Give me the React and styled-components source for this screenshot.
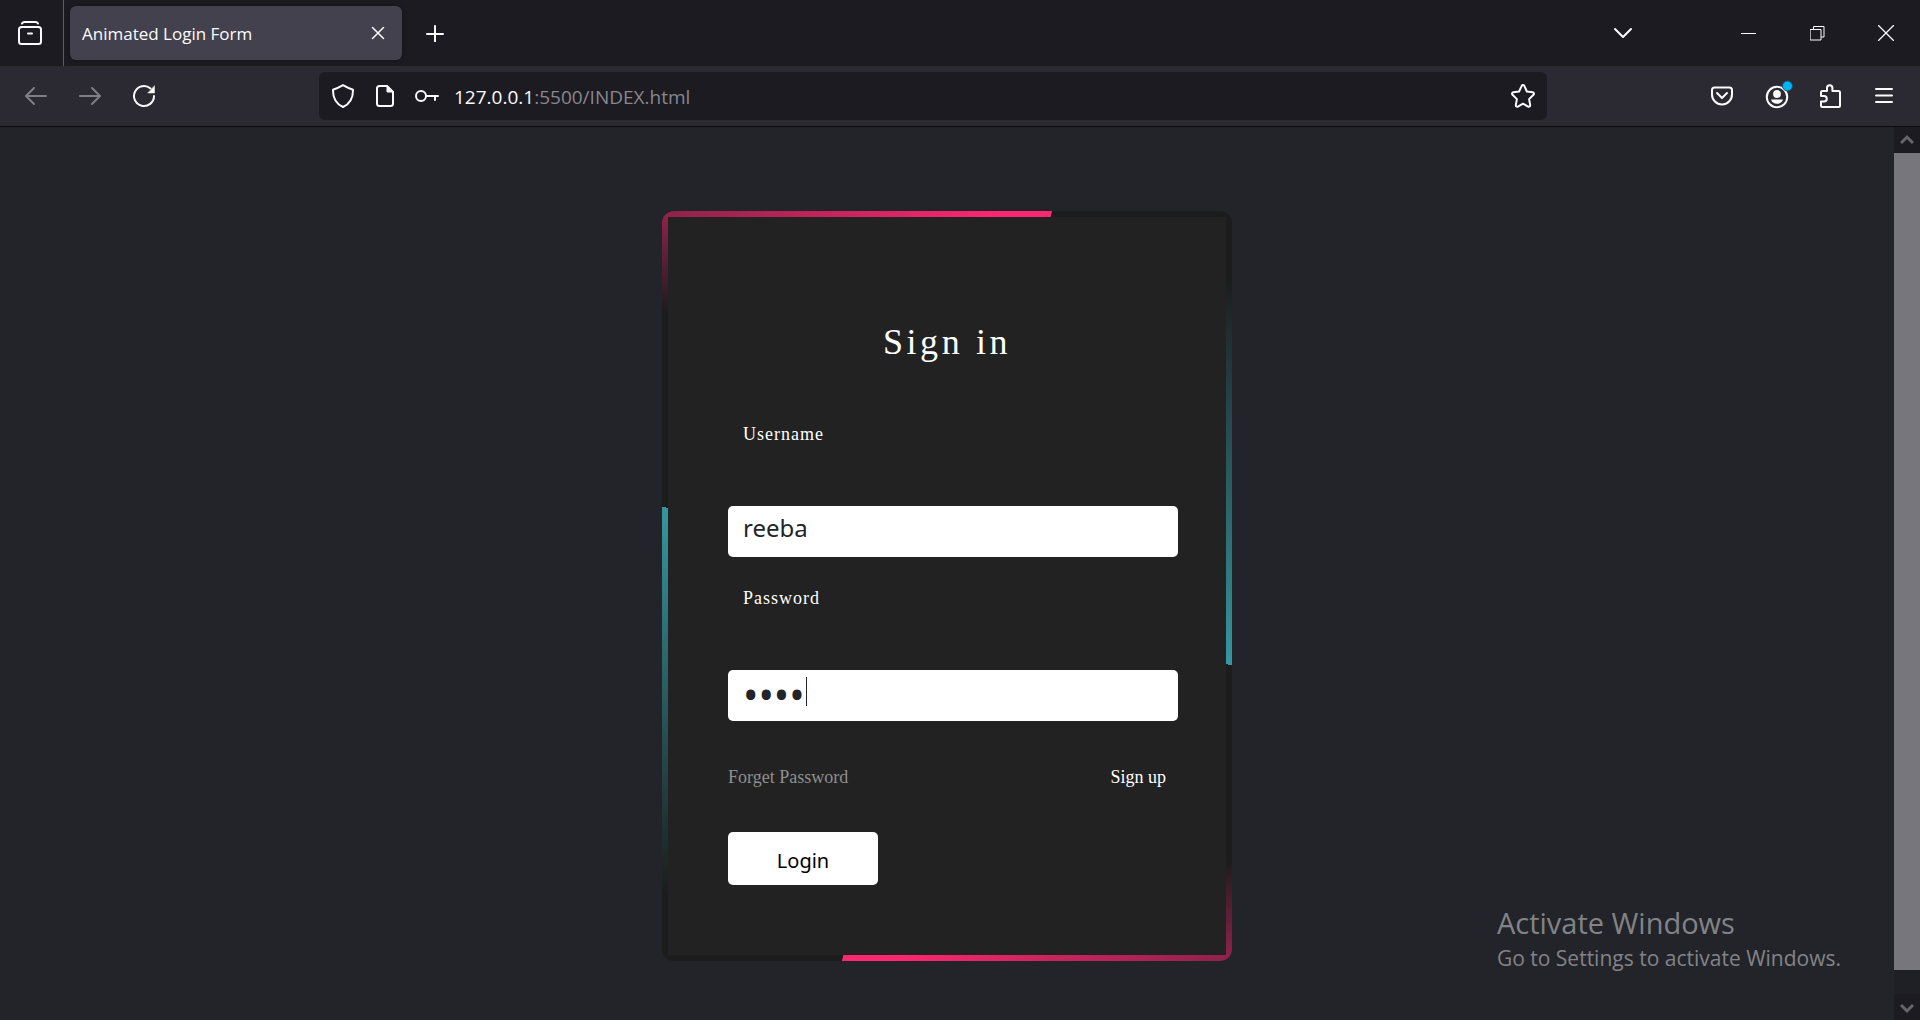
import React from "react";
import styled, { createGlobalStyle } from "styled-components";

const ui = '"Open Sans", "Noto Sans", sans-serif';
const serif = '"Liberation Serif", "Times New Roman", serif';

const GlobalStyle = createGlobalStyle`
  * { box-sizing: border-box; }
  body { margin: 0; background: #23242a; color: #fbfbfe; font-family: ${ui}; }
  button, input { font-family: inherit; }
`;

const Window = styled.div`
  display: flex;
  flex-direction: column;
  min-height: 100vh;
`;

const TabBar = styled.header`
  display: flex;
  align-items: stretch;
  height: 66px;
  background: #1c1b22;
`;

const IconButton = styled.button`
  display: flex;
  align-items: center;
  justify-content: center;
  flex: none;
  width: ${(p) => p.$width || 54}px;
  padding: 0;
  border: 0;
  background: transparent;
  color: #fbfbfe;
  opacity: ${(p) => (p.disabled ? 0.4 : 1)};
`;

const ViewCell = styled.div`
  display: flex;
  width: 64px;
  border-right: 1px solid #5b5b66;
`;

const Tab = styled.div`
  display: flex;
  align-items: center;
  width: 332px;
  margin: 6px;
  padding-left: 12px;
  border-radius: 6px;
  background: #42414d;
  box-shadow: 0 0 4px rgba(0, 0, 0, 0.4);
`;

const TabTitle = styled.span`
  flex: 1;
  padding-top: 2px;
  font-size: 17px;
  line-height: 24px;
  white-space: nowrap;
`;

const WindowControls = styled.div`
  display: flex;
  margin-left: auto;
`;

const ControlGroup = styled.div`
  display: flex;
  margin-left: 64px;
`;

const NavBar = styled.nav`
  display: flex;
  align-items: stretch;
  gap: 148px;
  height: 61px;
  padding: 6px 9px;
  background: #2b2a33;
  border-bottom: 1px solid #0c0c0d;
`;

const NavGroup = styled.div`
  display: flex;
`;

const AddressBar = styled.div`
  display: flex;
  flex: 1;
  padding: 0 3px;
  border-radius: 6px;
  background: #1c1b22;
`;

const Address = styled.div`
  flex: 1;
  padding-left: 6px;
  font-size: 19px;
  line-height: 50px;
  white-space: nowrap;
`;

const Dim = styled.span`
  color: #88878d;
`;

const Viewport = styled.div`
  position: relative;
  display: flex;
  flex: 1;
`;

const Page = styled.main`
  display: flex;
  flex: 1;
  align-items: flex-start;
  justify-content: center;
  padding: 84px 0 59px;
`;

const Card = styled.section`
  width: 570px;
  padding: 6px;
  border-radius: 12px;
  background:
    linear-gradient(104deg, #8d2248 0, #ff2770 330px, #ff2770 378px, transparent 379px) 0 0 / 396px 6px no-repeat,
    linear-gradient(284deg, #8d2248 0, #ff2770 330px, #ff2770 378px, transparent 379px) 100% 100% / 396px 6px no-repeat,
    linear-gradient(180deg, #8d2248, #1c1c1c) 0 6px / 6px 94px no-repeat,
    linear-gradient(0deg, #8d2248, #1c1c1c) 100% calc(100% - 6px) / 6px 94px no-repeat,
    linear-gradient(194deg, transparent 2px, #35979f 2px, #1c1c1c 378px) 0 295px / 6px 385px no-repeat,
    linear-gradient(14deg, transparent 2px, #35979f 2px, #1c1c1c 378px) 100% calc(100% - 295px) / 6px 385px no-repeat,
    #1c1c1c;
`;

const Form = styled.form`
  display: flex;
  flex-direction: column;
  padding: 104px 0 70px;
  background: #222;
`;

const Title = styled.h2`
  margin: 0 0 61px;
  font-family: ${serif};
  font-size: 36px;
  font-weight: 400;
  line-height: 42px;
  letter-spacing: 0.1em;
  text-align: center;
  color: #fff;
`;

const Fields = styled.div`
  display: flex;
  flex-direction: column;
  gap: 31px;
  padding: 0 48px 0 60px;
`;

const Field = styled.div`
  position: relative;
  display: flex;
  flex-direction: column;
  gap: 62px;
`;

const Label = styled.label`
  padding-left: 15px;
  font-family: ${serif};
  font-size: 18px;
  line-height: 20px;
  letter-spacing: 1px;
  color: #fff;
`;

const TextBox = styled.input`
  width: 100%;
  height: 51px;
  padding: 0 15px 8px;
  border: 0;
  border-radius: 5px;
  outline: none;
  background: #fff;
  color: #23242a;
  font-family: "Noto Sans", sans-serif;
  font-size: 24px;
  &[type="password"] {
    padding-bottom: 3px;
    font-size: 41px;
    line-height: 48px;
  }
`;

const Caret = styled.span`
  position: absolute;
  left: 78px;
  bottom: 15px;
  width: 1px;
  height: 29px;
  background: #23242a;
`;

const Links = styled.div`
  display: flex;
  justify-content: space-between;
  padding: 46px 60px 45px;
  font-family: ${serif};
  font-size: 18px;
  line-height: 20px;
`;

const FormLink = styled.a`
  color: ${(p) => (p.$bright ? "#fff" : "#8f8f8f")};
  text-decoration: none;
`;

const Submit = styled.button`
  align-self: flex-start;
  width: 150px;
  height: 53px;
  margin-left: 60px;
  padding: 3px 0 0;
  border: 0;
  border-radius: 5px;
  background: #fff;
  color: #000;
  font-family: "Noto Sans", sans-serif;
  font-size: 20px;
`;

const Watermark = styled.aside`
  position: absolute;
  right: 79px;
  bottom: 47px;
  color: #828387;
`;

const WatermarkTitle = styled.div`
  font-size: 29px;
  line-height: 40px;
`;

const WatermarkText = styled.div`
  font-size: 21px;
  line-height: 30px;
`;

const ScrollBar = styled.div`
  display: flex;
  flex-direction: column;
  width: 26px;
  background: #1f2025;
`;

const ScrollButton = styled(IconButton)`
  width: 26px;
  height: 26px;
  background: #1c1b22;
  color: #66656b;
`;

const Thumb = styled.div`
  flex: 1;
  margin-bottom: 24px;
  background: #77767c;
`;

function Icon({ size = 24, height, width = 1.5, children }) {
  return (
    <svg
      width={size}
      height={height || size}
      viewBox={`0 0 ${size} ${height || size}`}
      fill="none"
      stroke="currentColor"
      strokeWidth={width}
      strokeLinecap="round"
      strokeLinejoin="round"
      aria-hidden="true"
    >
      {children}
    </svg>
  );
}

export default function App() {
  return (
    <Window>
      <GlobalStyle />
      <TabBar>
        <ViewCell>
          <IconButton $width={60} aria-label="Open tabs view">
            <Icon width={2}>
              <path d="M4 2.500C4.600 1.400 5.400 1 6.500 1h11c1.100 0 1.900.4 2.500 1.500" />
              <rect x="1" y="6" width="22" height="17" rx="2.500" />
              <path d="M10 12.500h4" />
            </Icon>
          </IconButton>
        </ViewCell>
        <Tab>
          <TabTitle>Animated Login Form</TabTitle>
          <IconButton $width={48} aria-label="Close tab">
            <Icon size={14}>
              <path d="M1.500 1.500l11 11M12.500 1.500l-11 11" />
            </Icon>
          </IconButton>
        </Tab>
        <IconButton aria-label="New tab">
          <Icon size={18} width={2}>
            <path d="M9 2v16M1 10h16" />
          </Icon>
        </IconButton>
        <WindowControls>
          <IconButton aria-label="List all tabs">
            <Icon size={20} width={2}>
              <path d="M2 6l8 8 8-8" />
            </Icon>
          </IconButton>
          <ControlGroup>
            <IconButton $width={69} aria-label="Minimize">
              <Icon size={15} width={1}>
                <path d="M0 7.500h15" />
              </Icon>
            </IconButton>
            <IconButton $width={69} aria-label="Restore">
              <Icon size={15} width={1}>
                <path d="M.5 3.500h10.500v10.500h-10.500zM3.500 3V.5h10.500v10.500h-2.500" strokeLinejoin="miter" />
              </Icon>
            </IconButton>
            <IconButton $width={68} aria-label="Close window">
              <Icon size={16} width={1.3}>
                <path d="M.5.5l15 15M15.500.5l-15 15" />
              </Icon>
            </IconButton>
          </ControlGroup>
        </WindowControls>
      </TabBar>

      <NavBar>
        <NavGroup>
          <IconButton disabled aria-label="Back">
            <Icon width={2}>
              <path d="M22 12H2.500M10 4l-8 8 8 8" />
            </Icon>
          </IconButton>
          <IconButton disabled aria-label="Forward">
            <Icon width={2}>
              <path d="M2 12h19.500M14 4l8 8-8 8" />
            </Icon>
          </IconButton>
          <IconButton aria-label="Reload">
            <Icon width={2}>
              <path d="M22 12a10 10 0 1 1-3.500-7.600" />
              <path d="M22.500 2v7h-6.500z" fill="currentColor" strokeWidth="0.5" />
            </Icon>
          </IconButton>
        </NavGroup>
        <AddressBar>
          <IconButton $width={42} aria-label="Tracking protection">
            <Icon width={2}>
              <path d="M12 1.200c3 1.800 6 3.300 10 4.500.2 8-2.200 13.600-10 17.300C4.200 19.300 1.800 13.700 2 5.700 6 4.500 9 3 12 1.200z" />
            </Icon>
          </IconButton>
          <IconButton $width={42} aria-label="Site information">
            <Icon width={2}>
              <path d="M14 2H6.500A2.500 2.500 0 0 0 4 4.500v15A2.500 2.500 0 0 0 6.500 22h11a2.500 2.500 0 0 0 2.500-2.500V8z" />
              <path d="M14 2v6h6z" fill="currentColor" strokeWidth="1" />
            </Icon>
          </IconButton>
          <IconButton $width={42} aria-label="Saved logins">
            <Icon width={2}>
              <circle cx="6" cy="12" r="5" />
              <path d="M11 12h12M20 12v4" />
            </Icon>
          </IconButton>
          <Address role="textbox" aria-label="Address">
            127.0.0.1<Dim>:5500/INDEX.html</Dim>
          </Address>
          <IconButton $width={42} aria-label="Bookmark this page">
            <Icon width={2}>
              <path d="M10.700 1.900c.5-1.100 2.100-1.100 2.600 0l2.600 5.600 5.800.8c1.200.2 1.700 1.600.8 2.500l-4.400 4.300 1.100 6c.2 1.200-1 2.100-2.100 1.500L12 19.700l-5.100 2.900c-1.100.6-2.300-.3-2.100-1.500l1.100-6-4.400-4.300c-.9-.9-.4-2.300.8-2.500l5.800-.8z" />
            </Icon>
          </IconButton>
        </AddressBar>
        <NavGroup>
          <IconButton aria-label="Save to Pocket">
            <Icon width={2}>
              <path d="M4.500 3.500h15a2.500 2.500 0 0 1 2.500 2.500v4.500a10 10 0 0 1-20 0V6a2.500 2.500 0 0 1 2.500-2.500z" />
              <path d="M7 9l5 5 5-5" />
            </Icon>
          </IconButton>
          <IconButton aria-label="Account">
            <Icon size={34} width={2}>
              <circle cx="18" cy="18" r="10.200" />
              <circle cx="18" cy="15" r="3.900" fill="currentColor" stroke="none" />
              <path d="M12 20.500h12c-.6 2.600-3 4.300-6 4.300s-5.400-1.700-6-4.300z" fill="currentColor" stroke="none" />
              <circle cx="28.500" cy="7" r="5" fill="#00b3f4" stroke="#18566f" strokeWidth="1" />
            </Icon>
          </IconButton>
          <IconButton aria-label="Extensions">
            <Icon width={2}>
              <path d="M3 10V8.500A1.500 1.500 0 0 1 4.500 7H9V4a2.700 2.700 0 0 1 5.400 0v3h6.100A1.500 1.500 0 0 1 22 8.500v13a1.500 1.500 0 0 1-1.500 1.500h-16A1.500 1.500 0 0 1 3 21.500V17.500h3a2.800 2.800 0 0 0 0-5.600H3z" />
            </Icon>
          </IconButton>
          <IconButton aria-label="Application menu">
            <Icon width={2}>
              <path d="M4 5h16M4 11.500h16M4 18h16" />
            </Icon>
          </IconButton>
        </NavGroup>
      </NavBar>

      <Viewport>
        <Page>
          <Card>
            <Form onSubmit={(e) => e.preventDefault()}>
              <Title>Sign in</Title>
              <Fields>
                <Field>
                  <Label htmlFor="username">Username</Label>
                  <TextBox id="username" type="text" defaultValue="reeba" />
                </Field>
                <Field>
                  <Label htmlFor="password">Password</Label>
                  <TextBox id="password" type="password" defaultValue="1234" />
                  <Caret />
                </Field>
              </Fields>
              <Links>
                <FormLink href="#forget">Forget Password</FormLink>
                <FormLink href="#signup" $bright>Sign up</FormLink>
              </Links>
              <Submit type="submit">Login</Submit>
            </Form>
          </Card>
        </Page>
        <Watermark>
          <WatermarkTitle>Activate Windows</WatermarkTitle>
          <WatermarkText>Go to Settings to activate Windows.</WatermarkText>
        </Watermark>
        <ScrollBar>
          <ScrollButton aria-label="Scroll up">
            <Icon size={14} width={3}>
              <path d="M1 10l6-6 6 6" strokeLinecap="butt" strokeLinejoin="miter" />
            </Icon>
          </ScrollButton>
          <Thumb />
          <ScrollButton aria-label="Scroll down">
            <Icon size={14} width={3}>
              <path d="M1 5l6 6 6-6" strokeLinecap="butt" strokeLinejoin="miter" />
            </Icon>
          </ScrollButton>
        </ScrollBar>
      </Viewport>
    </Window>
  );
}
